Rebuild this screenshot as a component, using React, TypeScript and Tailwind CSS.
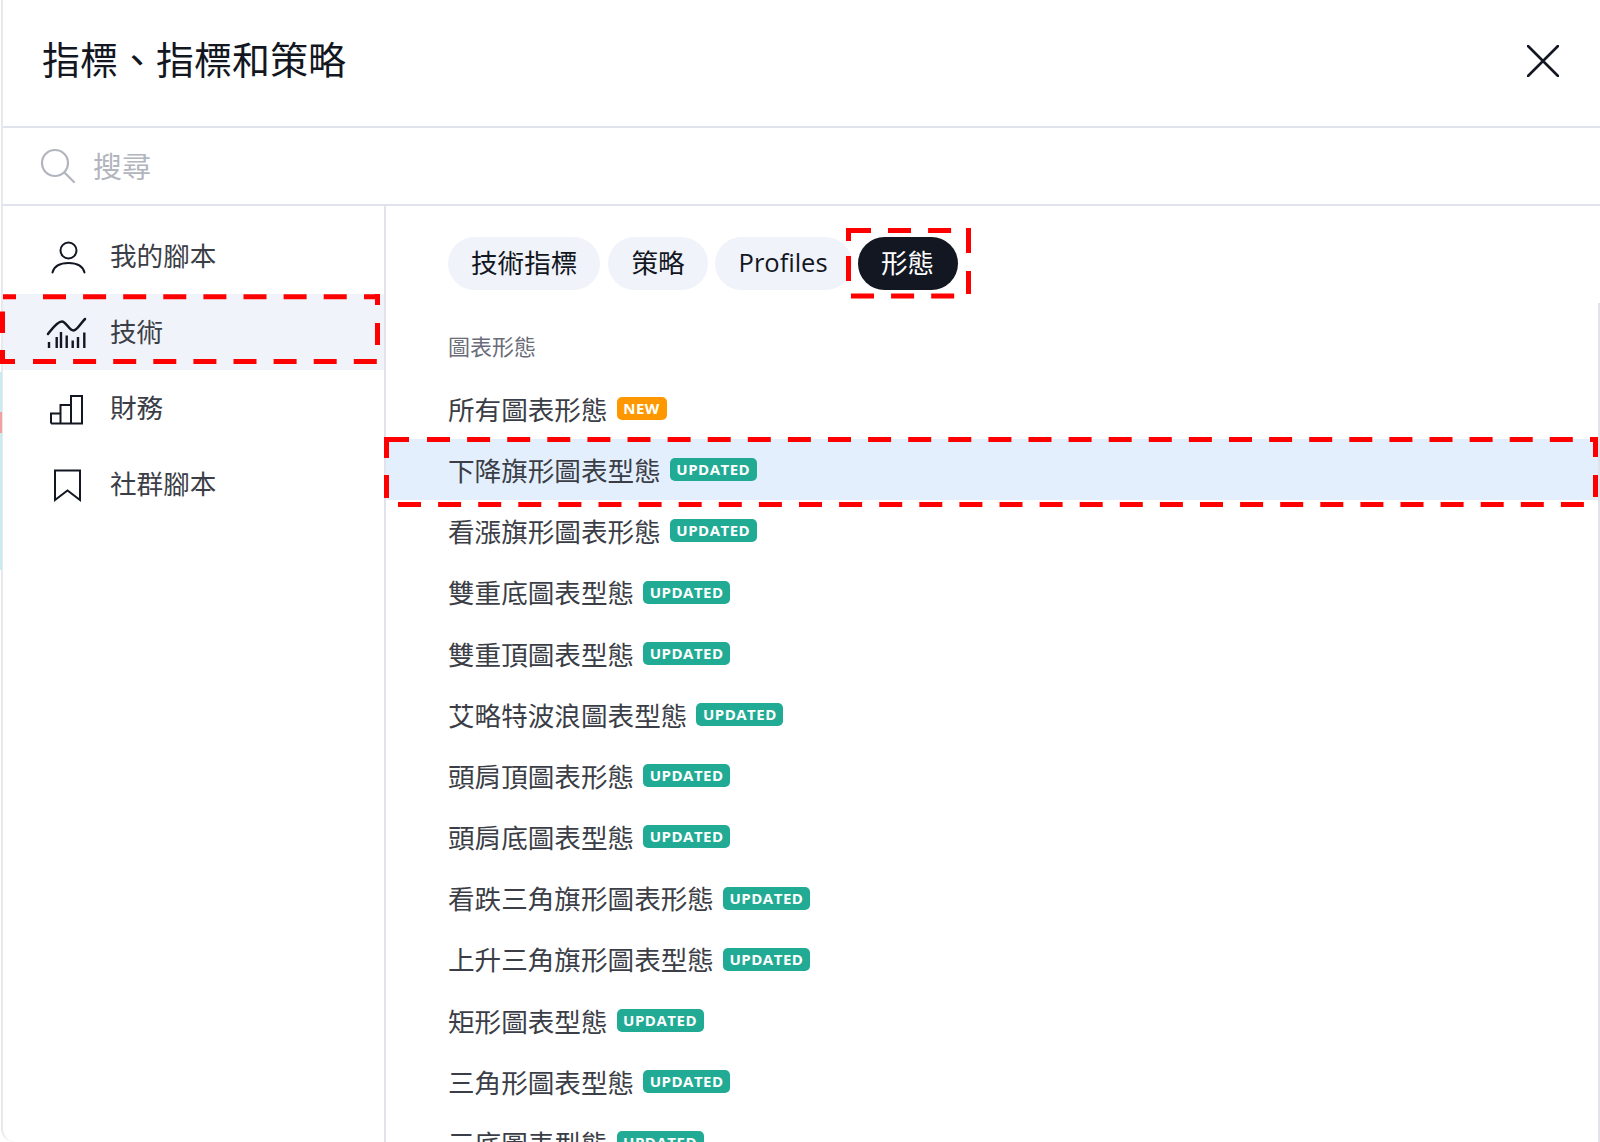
const sans = "font-['Open_Sans','Noto_Sans_CJK_TC',sans-serif]";

const sideItems = [
  { label: "我的腳本", icon: "user" },
  { label: "技術", icon: "tech", active: true },
  { label: "財務", icon: "finance" },
  { label: "社群腳本", icon: "bookmark" },
];

const tabs = ["技術指標", "策略"];

const patterns = [
  { name: "所有圖表形態", badge: "NEW" },
  { name: "下降旗形圖表型態", badge: "UPDATED", selected: true },
  { name: "看漲旗形圖表形態", badge: "UPDATED" },
  { name: "雙重底圖表型態", badge: "UPDATED" },
  { name: "雙重頂圖表型態", badge: "UPDATED" },
  { name: "艾略特波浪圖表型態", badge: "UPDATED" },
  { name: "頭肩頂圖表形態", badge: "UPDATED" },
  { name: "頭肩底圖表型態", badge: "UPDATED" },
  { name: "看跌三角旗形圖表形態", badge: "UPDATED" },
  { name: "上升三角旗形圖表型態", badge: "UPDATED" },
  { name: "矩形圖表型態", badge: "UPDATED" },
  { name: "三角形圖表型態", badge: "UPDATED" },
  { name: "三底圖表型態", badge: "UPDATED" },
];

function SideIcon({ name }: { name: string }) {
  return (
    <svg width="53" height="53" viewBox="0 0 53 53" fill="none" stroke="#131722" className="shrink-0">
      {name === "user" && (
        <>
          <circle cx="28.5" cy="20.5" r="8" strokeWidth="2" />
          <path d="M12.5 42.5C14 36.5 20 33 28.5 33S43 36.5 44.5 42.5" strokeWidth="2" strokeLinecap="round" />
        </>
      )}
      {name === "tech" && (
        <>
          <path d="M8 28C12 23 17 15.500 22 15.500C26 15.500 29 24.500 33.500 24.500C37 24.500 41 17 45 13" strokeWidth="2.500" strokeLinecap="round" />
          <path d="M9 36V42M16.700 31V42M21 26V42M26.700 29.500V42M32.700 34.500V42M38 31V42M44.300 26.500V42" strokeWidth="2.400" />
        </>
      )}
      {name === "finance" && <path d="M11 41.500V31.500H20.500V41.500M20.500 41.500V23H31V41.500M31 41.500V14H42V41.500H11" strokeWidth="2" />}
      {name === "bookmark" && <path d="M15 12.500H40V42L27.500 32.500L15 42Z" strokeWidth="2" strokeLinejoin="miter" />}
    </svg>
  );
}

function Badge({ text }: { text: string }) {
  return (
    <span
      className={`ml-[9px] inline-flex h-[23px] shrink-0 items-center justify-center rounded-[5px] text-[15px] leading-none font-bold tracking-[0.5px] text-white ${
        text === "NEW" ? "w-[50px] bg-[#ff9800]" : "w-[87px] bg-[#22ab94]"
      }`}
    >
      {text}
    </span>
  );
}

// the red dashes someone marked up the screenshot with
function run(from: number, to: number, at: number, horizontal: boolean) {
  return horizontal ? `M${from} ${at}H${to}` : `M${at} ${from}V${to}`;
}

function series(start: number, count: number, at: number, horizontal: boolean, len = 23, period = 40.1) {
  let d = "";
  for (let i = 0; i < count; i++) {
    const a = start + i * period;
    d += run(a, a + len, at, horizontal);
  }
  return d;
}

const markup = [
  // sidebar item
  run(3, 16, 296.7, true),
  series(43, 8, 296.7, true),
  run(364, 380, 296.7, true),
  run(294, 305, 377.5, false),
  run(323, 345, 377.5, false),
  series(33, 9, 361.5, true),
  run(0, 15, 361.5, true),
  run(311.500, 333, 2.5, false),
  run(350, 364, 2.5, false),
  // selected row
  run(384, 409, 439.5, true),
  series(427, 29, 439.5, true),
  run(1590, 1598, 439.5, true),
  run(437, 457, 1595.5, false),
  run(475, 497, 1595.5, false),
  series(398, 30, 504.5, true),
  run(437, 458, 386.5, false),
  run(475, 498, 386.5, false),
  // active tab
  run(846, 871, 230.5, true),
  series(888, 2, 230.5, true),
  run(966, 971, 230.5, true),
  run(228, 253, 968.5, false),
  run(271, 294, 968.5, false),
  series(851, 3, 296, true),
  run(228, 241, 848.5, false),
  run(256, 281, 848.5, false),
].join("");

export default function App() {
  return (
    <div className={`relative h-[1142px] w-[1600px] overflow-hidden bg-white ${sans}`}>
      <div className="absolute top-[372px] left-0 h-[198px] w-[2px] bg-[#c8ecef]" />
      <div className="absolute top-[412px] left-0 h-[21px] w-[2px] bg-[#f2a0a0]" />

      <div className="ml-[1px] flex h-full flex-col rounded-bl-[14px] border-l-2 border-[#e8e9ec] bg-white">
        <div className="flex h-[128px] shrink-0 items-center justify-between border-b-2 border-[#e0e3eb] pr-[41px] pl-[39px]">
          <h1 className="mb-[8px] text-[38px] leading-none font-normal text-[#131722]">指標、指標和策略</h1>
          <svg width="32" height="32" viewBox="0 0 32 32" fill="none" stroke="#131722" strokeWidth="2.600" strokeLinecap="round" className="mt-[-4px]">
            <path d="M1 1L31 31M31 1L1 31" />
          </svg>
        </div>

        <div className="flex h-[78px] shrink-0 items-center gap-[17px] border-b-2 border-[#e0e3eb] pl-[37px]">
          <svg width="36" height="36" viewBox="0 0 36 36" fill="none" stroke="#b2b5be" strokeWidth="2.200" strokeLinecap="round">
            <circle cx="15" cy="15" r="13" />
            <path d="M25 25L34 34" />
          </svg>
          <span className="text-[29px] leading-none text-[#b2b5be]">搜尋</span>
        </div>

        <div className="flex min-h-0 flex-1">
          <nav className="w-[383px] shrink-0 border-r-2 border-[#e0e3eb] pt-[12px]">
            {sideItems.map((item) => (
              <div
                key={item.label}
                className={`flex h-[76px] items-center gap-[17px] pl-[37px] text-[26.600px] leading-none text-[#3b3e46] ${
                  item.active ? "bg-[#f0f3fa]" : ""
                }`}
              >
                <SideIcon name={item.icon} />
                <span>{item.label}</span>
              </div>
            ))}
          </nav>

          <main className="relative min-w-0 flex-1">
            <div className="absolute top-[97px] right-0 bottom-0 w-[2px] bg-[#e0e3eb]" />
            <div className="flex gap-[8px] pt-[31px] pl-[62px]">
              {tabs.map((tab) => (
                <div key={tab} className="flex h-[53px] items-center rounded-full bg-[#f0f3fa] px-[23px] text-[26.600px] leading-none text-[#131722]">
                  {tab}
                </div>
              ))}
              <div className="ml-[-1px] flex h-[53px] w-[137px] items-center justify-center rounded-full bg-[#f0f3fa] pb-[1px] text-[25.500px] leading-none text-[#131722]">
                Profiles
              </div>
              <div className="ml-[-2px] flex h-[53px] w-[100px] items-center justify-center rounded-full bg-[#131722] text-[26.600px] leading-none text-white">
                形態
              </div>
            </div>

            <div className="mt-[37px] mb-[13px] flex h-[38px] items-center pl-[62px] text-[22px] leading-none text-[#6a6d78]">
              圖表形態
            </div>

            <div>
              {patterns.map((p) => (
                <div
                  key={p.name}
                  className={`flex h-[61.200px] items-center pr-[4px] pl-[62px] text-[26.600px] leading-none text-[#3b3e46] ${
                    p.selected ? "bg-[#e3effd]" : ""
                  }`}
                >
                  <span className="pt-[3px]">{p.name}</span>
                  <Badge text={p.badge} />
                </div>
              ))}
            </div>
          </main>
        </div>
      </div>

      <svg width="1600" height="1142" className="pointer-events-none absolute top-0 left-0">
        <path d={markup} fill="none" stroke="#ff0000" strokeWidth="5" />
      </svg>
    </div>
  );
}
